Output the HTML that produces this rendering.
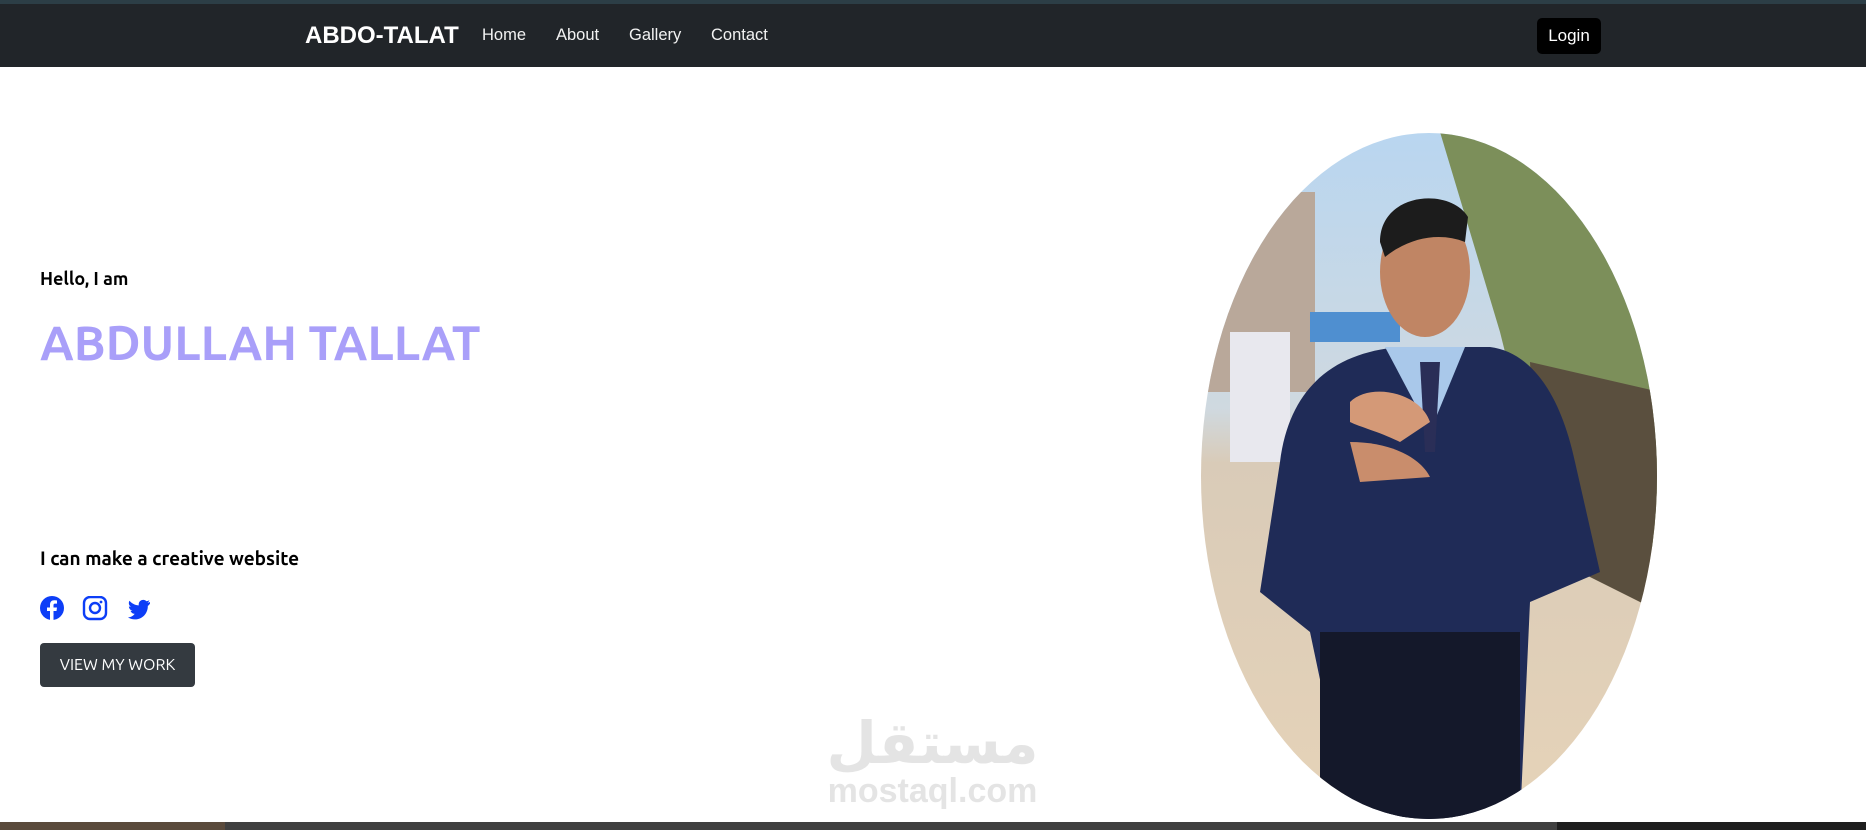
<!DOCTYPE html>
<html><head><meta charset="utf-8"><style>
*{margin:0;padding:0;box-sizing:border-box}
body{width:1866px;height:830px;overflow:hidden;background:#fff;font-family:"Ubuntu","DejaVu Sans","Liberation Sans",sans-serif;position:relative}
.top{position:absolute;left:0;top:0;width:1866px;height:4px;background:#2c3e46}
nav{position:absolute;left:0;top:4px;width:1866px;height:63px;background:#212529;font-family:"Liberation Sans",sans-serif;color:#fff}
nav .brand{position:absolute;left:305px;top:18px;font-size:24px;font-weight:bold}
nav a{position:absolute;top:22px;font-size:16.5px;color:#f2f2f2}
.login{position:absolute;left:1537px;top:14px;width:64px;height:36px;background:#000;border-radius:5px;font-size:17px;text-align:center;line-height:36px}
.t{position:absolute;left:40px;color:#000;font-weight:bold}
.btn{position:absolute;left:40px;top:643px;width:155px;height:44px;background:#343a40;border-radius:4px;color:#fff;font-size:16px;text-align:center;line-height:44px}
.wm{position:absolute;left:820px;top:700px;width:225px;text-align:center;color:#e4e4e4;font-family:"Liberation Sans","DejaVu Sans",sans-serif;font-weight:bold}
.bar{position:absolute;left:0;top:822px;width:1866px;height:8px;background:#404040}
</style></head><body>
<div class="top"></div>
<nav><span class="brand">ABDO-TALAT</span>
<a style="left:482px">Home</a><a style="left:556px">About</a><a style="left:629px">Gallery</a><a style="left:711px">Contact</a>
<div class="login">Login</div></nav>
<div class="t" style="top:269px;font-size:18px">Hello, I am</div>
<div class="t" style="top:316px;font-size:48px;color:#a99ff9">ABDULLAH TALLAT</div>
<div class="t" style="top:547px;font-size:19px">I can make a creative website</div>
<svg style="position:absolute;left:40px;top:596px" width="120" height="26" viewBox="0 0 120 26">
<circle cx="12" cy="12" r="12" fill="#0d3ef7"/><path d="M13.5 24V15h3l.5-3.5h-3.5V9.3c0-1 .3-1.7 1.8-1.7H17V4.5c-.4 0-1.5-.2-2.7-.2-2.7 0-4.3 1.6-4.3 4.5v2.7H7V15h3v9z" fill="#fff"/>
<rect x="44" y="1" width="22" height="22" rx="6" fill="none" stroke="#0d3ef7" stroke-width="2.4"/><circle cx="55" cy="12" r="5" fill="none" stroke="#0d3ef7" stroke-width="2.4"/><circle cx="61" cy="6" r="1.4" fill="#0d3ef7"/>
<path d="M110 6c-.8.4-1.7.6-2.6.7.9-.6 1.6-1.4 2-2.5-.9.5-1.9.9-2.9 1.1a4.5 4.5 0 0 0-7.7 4.1c-3.7-.2-7-2-9.3-4.7-1.3 2.1-.6 4.8 1.4 6.1-.7 0-1.4-.2-2-.6 0 2.200 1.500 4.100 3.600 4.500-.7.2-1.4.2-2 .1.6 1.8 2.3 3.1 4.2 3.1A9 9 0 0 1 88 21.4c2 1.3 4.4 2 6.9 2 8.3 0 12.9-6.9 12.9-12.9v-.6c.9-.6 1.6-1.4 2.2-2.3z" fill="#0d3ef7"/>
</svg>
<div class="btn">VIEW MY WORK</div>
<svg style="position:absolute;left:1200px;top:132px" width="460" height="690" viewBox="0 0 460 690">
<defs><clipPath id="c"><ellipse cx="229" cy="344" rx="228" ry="343"/></clipPath>
<linearGradient id="sky" x1="0" y1="0" x2="0" y2="1"><stop offset="0" stop-color="#b9d6f0"/><stop offset=".4" stop-color="#cfd9e0"/><stop offset=".48" stop-color="#d9cbb8"/><stop offset="1" stop-color="#e6d3b8"/></linearGradient></defs>
<g clip-path="url(#c)">
<rect width="460" height="690" fill="url(#sky)"/>
<rect x="0" y="60" width="115" height="200" fill="#b9a89a"/>
<rect x="110" y="180" width="90" height="30" fill="#4f8fd0"/>
<path d="M240 0 L460 0 L460 420 L340 360 L300 200 Z" fill="#7c8f5a"/>
<path d="M330 230 L460 260 L460 480 L340 420 Z" fill="#5a4f3e"/>
<rect x="30" y="200" width="60" height="130" fill="#e8e8ee"/>
<path d="M80 330 C90 250 140 220 200 215 L290 215 C330 220 360 260 375 330 L400 440 L330 470 L320 690 L150 690 L110 500 L60 460 Z" fill="#1f2b57"/>
<path d="M185 215 L230 300 L265 215 Z" fill="#a9c8ea"/>
<path d="M220 230 L240 230 L235 320 L225 320 Z" fill="#2a2e57"/>
<ellipse cx="225" cy="140" rx="45" ry="65" fill="#c08564"/>
<path d="M180 110 C180 60 250 55 268 85 L265 110 C240 100 210 105 185 125 Z" fill="#1c1c1c"/>
<path d="M150 270 C170 250 220 260 230 290 L200 310 C180 300 160 295 150 290 Z" fill="#d49977"/>
<path d="M150 310 C190 310 220 325 230 345 L160 350 Z" fill="#c98d6c"/>
<rect x="120" y="500" width="200" height="190" fill="#14182a"/>
</g></svg>
<div class="wm" style="top:708px;font-size:58px;line-height:70px;font-family:'DejaVu Sans',sans-serif">مستقل</div>
<div class="wm" style="top:772px;font-size:34px">mostaql.com</div>
<div class="bar"><div style="position:absolute;left:0;top:0;width:225px;height:8px;background:#5a4a3c"></div><div style="position:absolute;left:1557px;top:0;width:309px;height:8px;background:#1e1e1e"></div></div>
</body></html>
